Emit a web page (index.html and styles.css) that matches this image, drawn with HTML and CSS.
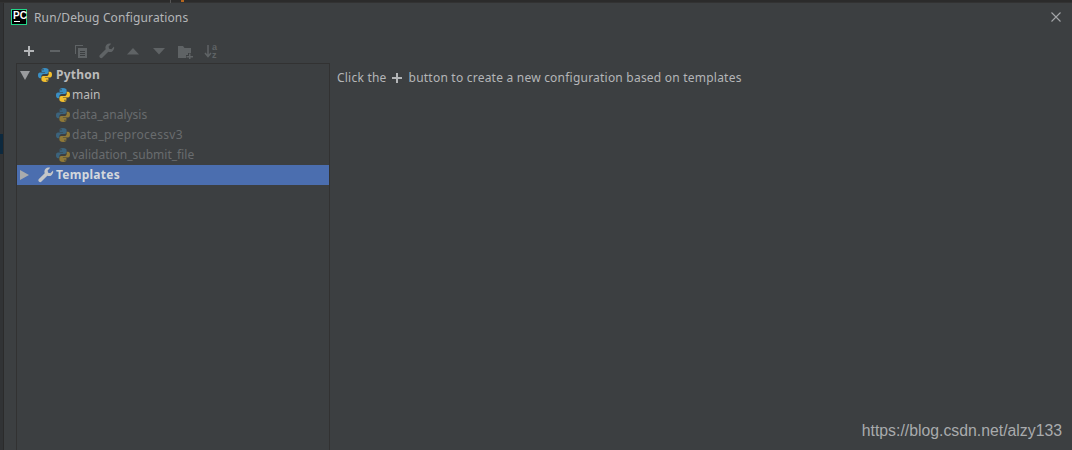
FILE: index.html
```html
<!DOCTYPE html>
<html lang="en">
<head>
<meta charset="utf-8">
<title>Run/Debug Configurations</title>
<link rel="stylesheet" href="styles.css">
</head>
<body>
<svg class="defs" width="0" height="0" aria-hidden="true">
  <defs>
    <symbol id="py" viewBox="0 0 16 16">
      <path fill="#3a8fc4" d="M7.9 1C5 1 4.6 2 4.6 3.2V5h3.5v.6H3C1.700 5.600 1 6.700 1 8.300c0 1.700.7 2.900 2 2.900h1.300V9.300c0-1.300 1.100-2.400 2.400-2.400h3.100c1 0 1.800-.8 1.800-1.900V3.200C11.600 2 10.500 1 7.900 1zM6 2.100a.7.7 0 1 1 0 1.400.7.7 0 0 1 0-1.400z"/>
      <path fill="#f4c02e" d="M8.100 15c2.900 0 3.300-1 3.300-2.200V11H7.900v-.6H13c1.300 0 2-1.100 2-2.700 0-1.700-.7-2.900-2-2.900h-1.300v1.900c0 1.300-1.100 2.400-2.400 2.400H6.200c-1 0-1.800.8-1.800 1.900v1.800C4.400 14 5.500 15 8.100 15zm1.900-1.100a.7.7 0 1 1 0-1.400.7.7 0 0 1 0 1.400z"/>
    </symbol>
    <symbol id="wrench" viewBox="0 0 16 16">
      <path fill="currentColor" d="M15 3.600l-2.600 2.600-2.300-.5-.5-2.300L12.200.8C10.600.2 8.800.5 7.600 1.700 6.400 2.900 6.100 4.700 6.700 6.200L.9 12c-.7.700-.7 1.900 0 2.600.8.800 1.900.7 2.600 0l5.800-5.800c1.500.6 3.300.3 4.500-.9C15 6.700 15.500 5.100 15 3.600z"/>
    </symbol>
  </defs>
</svg>
<div class="screen">
  <div class="ide-top">
    <span class="ide-divider"></span>
    <span class="ide-mark"></span>
  </div>
  <div class="stage">
    <div class="ide-left"><span class="ide-left-sel"></span></div>
    <div class="dialog">
      <header class="titlebar">
        <svg class="logo" width="16" height="16" viewBox="0 0 16 16" aria-hidden="true">
          <rect x=".5" y=".5" width="15" height="15" fill="#000" stroke="#21d789"/>
          <rect x="3" y="12" width="6" height="1" fill="#fff"/>
        </svg>
        <span class="logo-text">PC</span>
        <h1 class="title">Run/Debug Configurations</h1>
        <svg class="close" width="12" height="12" viewBox="0 0 12 12" aria-hidden="true">
          <path d="M1.500 1.500l9 9M10.500 1.500l-9 9" stroke="#a4a6a8" stroke-width="1.100" fill="none"/>
        </svg>
      </header>
      <div class="toolbar">
        <svg class="tool" width="16" height="16" viewBox="0 0 16 16" aria-hidden="true"><path d="M3 8h10M8 3v10" stroke="#b4b6b8" stroke-width="2" fill="none"/></svg>
        <svg class="tool" width="16" height="16" viewBox="0 0 16 16" aria-hidden="true"><path d="M3 8h10" stroke="#5f6365" stroke-width="2" fill="none"/></svg>
        <svg class="tool" width="16" height="16" viewBox="0 0 16 16" aria-hidden="true"><path fill="#5f6365" d="M2 2h8v1H3v8H2zM5 5h9v10H5zm2 3v1h5V8zm0 2v1h5v-1zm0 2v1h5v-1z" fill-rule="evenodd"/></svg>
        <svg class="tool tool-dim" width="16" height="16" aria-hidden="true"><use href="#wrench"/></svg>
        <svg class="tool" width="16" height="16" viewBox="0 0 16 16" aria-hidden="true"><path d="M2 11.500L8 5l6 6.500z" fill="#5f6365"/></svg>
        <svg class="tool" width="16" height="16" viewBox="0 0 16 16" aria-hidden="true"><path d="M2 5l6 6.500L14 5z" fill="#5f6365"/></svg>
        <svg class="tool" width="16" height="16" viewBox="0 0 16 16" aria-hidden="true"><path fill="#5f6365" d="M1 3h5l1.500 2H14v5h-3v2H9v3H1zM12 10.500h1.500V13H16v1.500h-2.500V16H12v-1.500H9.500V13H12z"/></svg>
        <svg class="tool" width="16" height="16" viewBox="0 0 16 16" aria-hidden="true"><path d="M5 2v11M2 10l3 3.500L8 10" stroke="#5f6365" stroke-width="1.500" fill="none"/><text x="9" y="7" class="az">a</text><text x="9" y="15" class="az">z</text></svg>
      </div>
      <div class="content">
        <nav class="tree">
          <div class="row">
            <span class="arrow arrow-down"></span>
            <svg class="ico" width="16" height="16" aria-hidden="true"><use href="#py"/></svg>
            <span class="label label-group">Python</span>
          </div>
          <div class="row row-child">
            <svg class="ico" width="16" height="16" aria-hidden="true"><use href="#py"/></svg>
            <span class="label">main</span>
          </div>
          <div class="row row-child row-temp">
            <svg class="ico" width="16" height="16" aria-hidden="true"><use href="#py"/></svg>
            <span class="label">data_analysis</span>
          </div>
          <div class="row row-child row-temp">
            <svg class="ico" width="16" height="16" aria-hidden="true"><use href="#py"/></svg>
            <span class="label label-wide">data_preprocessv3</span>
          </div>
          <div class="row row-child row-temp">
            <svg class="ico" width="16" height="16" aria-hidden="true"><use href="#py"/></svg>
            <span class="label">validation_submit_file</span>
          </div>
          <div class="row row-selected">
            <span class="arrow arrow-right"></span>
            <svg class="ico ico-wrench" width="16" height="16" aria-hidden="true"><use href="#wrench"/></svg>
            <span class="label label-group">Templates</span>
          </div>
        </nav>
        <section class="hint">
          <span>Click the</span>
          <svg class="hint-plus" width="16" height="16" viewBox="0 0 16 16" aria-hidden="true"><path d="M3 8h10M8 3v10" stroke="#b4b6b8" stroke-width="2" fill="none"/></svg>
          <span>button to create a new configuration based on templates</span>
        </section>
      </div>
    </div>
  </div>
  <div class="watermark">https://blog.csdn.net/alzy133</div>
</div>
</body>
</html>
```
FILE: styles.css
```css
* { box-sizing: border-box; }
html, body { margin: 0; padding: 0; }
body {
  width: 1072px;
  height: 450px;
  overflow: hidden;
  background: #3c3f41;
  font-family: "Noto Sans", "Open Sans", sans-serif;
  color: #bbbbbb;
}
.defs { display: block; height: 0; }
.screen {
  position: relative;
  display: flex;
  flex-direction: column;
  width: 1072px;
  height: 450px;
}
.ide-top {
  position: relative;
  flex: none;
  height: 3px;
  background: #2b2b2b;
  border-bottom: 1px solid #323232;
}
.ide-divider {
  position: absolute;
  left: 170px;
  top: 0;
  width: 1px;
  height: 3px;
  background: #555555;
}
.ide-mark {
  position: absolute;
  left: 181px;
  top: 0;
  width: 3px;
  height: 2px;
  background: #b5651d;
}
.stage { flex: 1; display: flex; min-height: 0; }
.ide-left {
  flex: none;
  width: 4px;
  background: #313335;
  border-right: 1px solid #2b2b2b;
  padding-top: 131px;
}
.ide-left-sel {
  display: block;
  width: 3px;
  height: 20px;
  background: #0d293e;
}
.dialog {
  flex: 1;
  display: flex;
  flex-direction: column;
  min-width: 0;
  background: #3c3f41;
}
.titlebar {
  position: relative;
  flex: none;
  display: flex;
  align-items: center;
  height: 27px;
  padding: 0 10px 0 7px;
}
.logo { flex: none; }
.logo-text {
  position: absolute;
  left: 9px;
  top: 7px;
  font: 700 10px/11px "Liberation Sans", sans-serif;
  color: #ffffff;
}
.title {
  flex: 1;
  margin: 2px 0 0 7px;
  font-size: 12px;
  font-weight: 400;
  line-height: 16px;
  letter-spacing: .13px;
  color: #b4b6b8;
}
.close { flex: none; }
.toolbar {
  flex: none;
  display: flex;
  align-items: center;
  gap: 10px;
  height: 33px;
  padding: 9px 0 0 17px;
}
.tool { flex: none; display: block; }
.tool-dim { color: #5f6365; }
.az {
  font: 700 9px/9px "Liberation Sans", sans-serif;
  fill: #5f6365;
}
.content { flex: 1; display: flex; min-height: 0; }
.tree {
  flex: none;
  width: 314px;
  margin-left: 12px;
  padding-top: 1px;
  border-top: 1px solid #323232;
  border-left: 1px solid #323232;
  border-right: 1px solid #323232;
}
.row {
  position: relative;
  display: flex;
  align-items: center;
  height: 20px;
  padding-left: 20px;
  font-size: 12px;
}
.row-child { padding-left: 38px; }
.row-child .ico { margin-right: 1px; }
.row-temp .ico { opacity: .45; }
.row-temp .label { color: #696c6e; }
.row-selected { background: #4b6eaf; padding-left: 21px; }
.ico { flex: none; margin-right: 2px; }
.ico-wrench { color: #c4c6c8; margin-right: 2px; }
.label { line-height: 20px; white-space: nowrap; color: #bbbbbb; }
.label-group { font-weight: 700; letter-spacing: .25px; }
.label-wide { letter-spacing: .3px; }
.row:first-child .ico { margin-right: 3px; }
.row-selected .label { color: #d5d8dc; }
.arrow {
  position: absolute;
  width: 0;
  height: 0;
  border-style: solid;
  border-color: transparent;
}
.arrow-down {
  left: 3px;
  top: 6px;
  border-width: 9px 5px 0 5px;
  border-top-color: #9a9c9e;
}
.arrow-right {
  left: 3px;
  top: 5px;
  border-width: 5px 0 5px 9px;
  border-left-color: #a9abad;
}
.hint {
  flex: 1;
  display: flex;
  align-items: center;
  align-self: flex-start;
  height: 16px;
  margin-top: 7px;
  padding-left: 7px;
  font-size: 12px;
  line-height: 16px;
  letter-spacing: .22px;
  color: #b4b6b8;
}
.hint-plus { flex: none; margin: 0 4px 0 2px; }
.watermark {
  position: absolute;
  right: 10px;
  bottom: 9px;
  font: 15.8px/20px "Liberation Sans", sans-serif;
  color: #a9abad;
}
```
